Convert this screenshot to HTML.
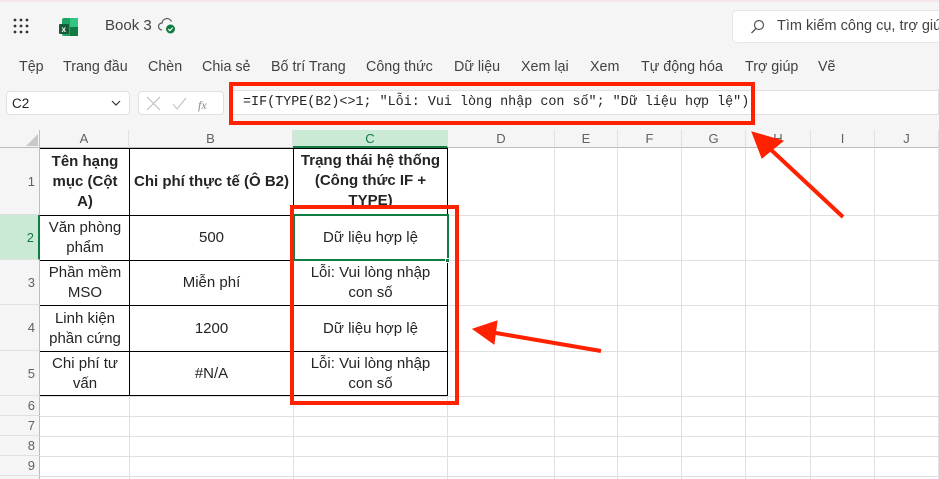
<!DOCTYPE html>
<html style="overflow:hidden;height:479px"><head><meta charset="utf-8"><style>
*{margin:0;padding:0;box-sizing:border-box}
body{width:939px;height:479px;overflow:hidden;background:#f5f5f5;font-family:"Liberation Sans","DejaVu Sans",sans-serif;position:relative;color:#242424}
.a{position:absolute}
.menu span{position:absolute;top:59px;font-size:14.3px;color:#424242}
.grid{position:absolute;left:0;top:130px;width:939px;height:349px;background:#fff;overflow:hidden}
.ch{position:absolute;top:0;height:18px;font-size:13px;color:#616161;text-align:center;line-height:18px;border-right:1px solid #e0e0e0;background:#f5f5f5;border-bottom:1px solid #bdbdbd}
.rh{position:absolute;left:0;width:40px;font-size:13px;color:#616161;text-align:right;padding-right:4px;border-bottom:1px solid #e0e0e0;background:#f5f5f5;border-right:1px solid #bdbdbd;display:flex;align-items:center;justify-content:flex-end}
.vl{position:absolute;top:18px;bottom:0;width:1px;background:#e0e0e0}
.hl{position:absolute;left:40px;right:0;height:1px;background:#e0e0e0}
.c{position:absolute;display:flex;align-items:center;justify-content:center;text-align:center;font-size:15px;line-height:20px;color:#242424;overflow:hidden;padding:0 5px}
.b{font-weight:bold}
</style></head><body>
<div class="a" style="left:0;top:0;width:939px;height:2px;background:#f6e6ea"></div>
<svg class="a" style="left:13px;top:18px" width="16" height="16"><g fill="#333"><circle cx="2" cy="2" r="1.4"/><circle cx="8" cy="2" r="1.4"/><circle cx="14" cy="2" r="1.4"/><circle cx="2" cy="8" r="1.4"/><circle cx="8" cy="8" r="1.4"/><circle cx="14" cy="8" r="1.4"/><circle cx="2" cy="14" r="1.4"/><circle cx="8" cy="14" r="1.4"/><circle cx="14" cy="14" r="1.4"/></g></svg>
<svg class="a" style="left:59px;top:17px" width="20" height="20"><rect x="3" y="1" width="16" height="18" rx="2" fill="#21a366"/><rect x="11" y="1" width="8" height="9" fill="#33c481"/><rect x="11" y="10" width="8" height="9" fill="#107c41"/><rect x="0" y="7" width="10" height="10" rx="1" fill="#185c37"/><text x="2.5" y="15" font-size="8" fill="#fff" font-family="Liberation Sans" font-weight="bold">x</text></svg>
<div class="a" style="left:105px;top:17px;font-size:15px;color:#424242">Book 3</div>
<svg class="a" style="left:158px;top:17px" width="18" height="18"><path d="M4 13a3.5 3.5 0 0 1 0-7 5 5 0 0 1 9.5-1.5" fill="none" stroke="#555" stroke-width="1.2"/><circle cx="12.5" cy="12" r="4.5" fill="#107c41"/><path d="M10.3 12l1.6 1.6 2.8-3" stroke="#fff" fill="none" stroke-width="1.2"/></svg>
<div class="a" style="left:732px;top:10px;width:220px;height:33px;background:#fff;border:1px solid #e6e6e6;border-radius:5px"></div>
<svg class="a" style="left:750px;top:19px" width="15" height="15"><circle cx="9" cy="6" r="4.5" fill="none" stroke="#555" stroke-width="1.2"/><path d="M6 9.5 1.5 14" stroke="#555" stroke-width="1.3"/></svg>
<div class="a" style="left:777px;top:18px;font-size:14.5px;color:#424242;white-space:nowrap">Tìm kiếm công cụ, trợ giúp</div>
<div class="menu">
<span style="left:19px">Tệp</span><span style="left:63px">Trang đầu</span><span style="left:148px">Chèn</span><span style="left:202px">Chia sẻ</span><span style="left:271px">Bố trí Trang</span><span style="left:366px">Công thức</span><span style="left:454px">Dữ liệu</span><span style="left:521px">Xem lại</span><span style="left:590px">Xem</span><span style="left:641px">Tự động hóa</span><span style="left:745px">Trợ giúp</span><span style="left:818px">Vẽ</span>
</div>
<div class="a" style="left:6px;top:91px;width:124px;height:24px;background:#fff;border:1px solid #e0e0e0;border-radius:4px;font-size:13.5px;padding:4px 5px">C2</div>
<svg class="a" style="left:111px;top:99px" width="10" height="8"><path d="M1 2l4 4 4-4" fill="none" stroke="#333" stroke-width="1.2"/></svg>
<div class="a" style="left:138px;top:91px;width:86px;height:24px;background:#fff;border:1px solid #e0e0e0;border-radius:4px"></div>
<svg class="a" style="left:146px;top:96px" width="70" height="16"><path d="M1 1l13 13M14 1 1 14" stroke="#bbb" stroke-width="1"/><path d="M27 8l4 5 9-11" stroke="#bbb" fill="none" stroke-width="1"/><text x="52" y="13" font-size="12" font-style="italic" fill="#888" font-family="Liberation Serif">fx</text></svg>
<div class="a" style="left:232px;top:90px;width:707px;height:25px;background:#fff;border:1px solid #e0e0e0;font-family:'Liberation Mono','DejaVu Sans Mono',monospace;font-size:13.4px;padding:4px 10px;white-space:nowrap;color:#242424">=IF(TYPE(B2)&lt;&gt;1; "Lỗi: Vui lòng nhập con số"; "Dữ liệu hợp lệ")</div>

<div class="grid">
<div class="a" style="left:0;top:0;width:40px;height:18px;background:#f5f5f5;border-right:1px solid #bdbdbd;border-bottom:1px solid #bdbdbd"></div>
<svg class="a" style="left:26px;top:4px" width="12" height="12"><path d="M12 0V12H0Z" fill="#c8c8c8"/></svg>
<div class="ch" style="left:40px;width:89px">A</div>
<div class="ch" style="left:129px;width:164px">B</div>
<div class="ch" style="left:293px;width:155px;background:#caead6;color:#107c41;border-bottom:2px solid #107c41">C</div>
<div class="ch" style="left:448px;width:107px">D</div>
<div class="ch" style="left:555px;width:63px">E</div>
<div class="ch" style="left:618px;width:64px">F</div>
<div class="ch" style="left:682px;width:64px">G</div>
<div class="ch" style="left:746px;width:65px">H</div>
<div class="ch" style="left:811px;width:64px">I</div>
<div class="ch" style="left:875px;width:64px">J</div>
<div class="vl" style="left:554px"></div><div class="vl" style="left:617px"></div><div class="vl" style="left:681px"></div><div class="vl" style="left:745px"></div><div class="vl" style="left:810px"></div><div class="vl" style="left:874px"></div><div class="vl" style="left:938px"></div><div class="vl" style="left:129px;top:266px"></div><div class="vl" style="left:293px;top:266px"></div><div class="vl" style="left:447px;top:266px"></div>
<div class="hl" style="top:85px"></div><div class="hl" style="top:130px"></div><div class="hl" style="top:175px"></div><div class="hl" style="top:221px"></div><div class="hl" style="top:266px"></div><div class="hl" style="top:286px"></div><div class="hl" style="top:306px"></div><div class="hl" style="top:326px"></div><div class="hl" style="top:346px"></div>
<div class="rh" style="top:18px;height:67px">1</div>
<div class="rh" style="top:85px;height:45px;background:#caead6;color:#107c41;border-right:2px solid #107c41">2</div>
<div class="rh" style="top:130px;height:45px">3</div>
<div class="rh" style="top:175px;height:46px">4</div>
<div class="rh" style="top:221px;height:45px">5</div>
<div class="rh" style="top:266px;height:20px">6</div>
<div class="rh" style="top:286px;height:20px">7</div>
<div class="rh" style="top:306px;height:20px">8</div>
<div class="rh" style="top:326px;height:20px">9</div>
<div class="rh" style="top:346px;height:20px"></div>
<div class="a" style="left:40px;top:18px;width:408px;height:248px;border:1px solid #000;border-left:none"></div>
<div class="a" style="left:129px;top:18px;width:1px;height:248px;background:#000"></div>
<div class="a" style="left:293px;top:18px;width:1px;height:248px;background:#000"></div>
<div class="a" style="left:40px;top:85px;width:408px;height:1px;background:#000"></div>
<div class="a" style="left:40px;top:130px;width:408px;height:1px;background:#000"></div>
<div class="a" style="left:40px;top:175px;width:408px;height:1px;background:#000"></div>
<div class="a" style="left:40px;top:221px;width:408px;height:1px;background:#000"></div>
<div class="c b" style="left:41px;top:18px;width:88px;height:67px;padding:0 8px">Tên hạng mục (Cột A)</div>
<div class="c b" style="left:130px;top:18px;width:163px;height:67px;white-space:nowrap;padding:0">Chi phí thực tế (Ô B2)</div>
<div class="c b" style="left:294px;top:18px;width:153px;height:67px;align-items:flex-start;padding:3px 6px 0">Trạng thái hệ thống (Công thức IF + TYPE)</div>
<div class="c" style="left:41px;top:86px;width:88px;height:44px">Văn phòng phẩm</div>
<div class="c" style="left:130px;top:86px;width:163px;height:44px">500</div>
<div class="c" style="left:294px;top:86px;width:153px;height:44px">Dữ liệu hợp lệ</div>
<div class="c" style="left:41px;top:131px;width:88px;height:44px">Phần mềm MSO</div>
<div class="c" style="left:130px;top:131px;width:163px;height:44px">Miễn phí</div>
<div class="c" style="left:294px;top:131px;width:153px;height:44px;padding:0 10px">Lỗi: Vui lòng nhập con số</div>
<div class="c" style="left:41px;top:176px;width:88px;height:45px">Linh kiện phần cứng</div>
<div class="c" style="left:130px;top:176px;width:163px;height:45px">1200</div>
<div class="c" style="left:294px;top:176px;width:153px;height:45px">Dữ liệu hợp lệ</div>
<div class="c" style="left:41px;top:222px;width:88px;height:44px;padding:0 10px">Chi phí tư vấn</div>
<div class="c" style="left:130px;top:222px;width:163px;height:44px">#N/A</div>
<div class="c" style="left:294px;top:222px;width:153px;height:44px;padding:0 10px">Lỗi: Vui lòng nhập con số</div>
<div class="a" style="left:293px;top:84px;width:156px;height:47px;border:2px solid #107c41"></div>
<div class="a" style="left:445px;top:128px;width:5px;height:5px;background:#107c41;border:1px solid #fff"></div>
</div>
<div class="a" style="left:229px;top:82px;width:526px;height:43px;border:4px solid #ff2200"></div>
<div class="a" style="left:290px;top:205px;width:169px;height:200px;border:4px solid #ff2200"></div>
<svg class="a" style="left:0;top:0" width="939" height="479"><g fill="#ff2200" stroke="#ff2200"><path d="M843 217 767 146" stroke-width="4"/><path d="M752 132 783 141 762 158Z" stroke-width="1"/><path d="M601 351 490 332" stroke-width="4"/><path d="M473 329 497 321 494 344Z" stroke-width="1"/></g></svg>
</body></html>
